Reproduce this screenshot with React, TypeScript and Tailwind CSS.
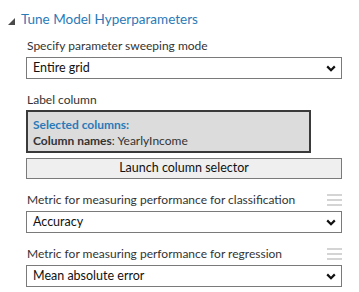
import { ReactNode } from 'react';

const font = { fontFamily: '"Segoe UI", Lato, "Noto Sans", sans-serif' };

function Chevron() {
  return (
    <svg width="10" height="7" viewBox="0 0 10 7" className="shrink-0">
      <path d="M1.2 1.4 L5 5.2 L8.8 1.4" fill="none" stroke="#111" strokeWidth="2.2" />
    </svg>
  );
}

function Grip() {
  return (
    <div className="flex flex-col gap-[3px] w-[15px]">
      <div className="h-[2px] bg-[#d4d4d4]" />
      <div className="h-[2px] bg-[#d4d4d4]" />
      <div className="h-[2px] bg-[#d4d4d4]" />
    </div>
  );
}

function Select({ value }: { value: string }) {
  return (
    <div className="h-[22px] w-[316px] border border-[#7a7a7a] bg-white flex items-center justify-between pl-[6px] pr-[5px] text-[12.5px] text-[#111]">
      <span>{value}</span>
      <Chevron />
    </div>
  );
}

function Label({ children, grip }: { children: ReactNode; grip?: boolean }) {
  return (
    <div className="flex items-center justify-between w-[316px] h-[18px] text-[12px] text-[#333]">
      <span className="pl-px whitespace-nowrap">{children}</span>
      {grip && <Grip />}
    </div>
  );
}

export default function App() {
  return (
    <div className="w-[359px] h-[292px] bg-white relative" style={font}>
      {/* Header */}
      <div className="flex items-center h-[24px] pt-[8px] box-content">
        <svg width="7" height="7" viewBox="0 0 7 7" className="ml-[8px] mt-[2px]">
          <polygon points="7,0 7,7 0,7" fill="#4a4a4a" />
        </svg>
        <span className="ml-[6px] text-[13.5px] text-[#2a7ab8] leading-none whitespace-nowrap">Tune Model Hyperparameters</span>
      </div>

      <div className="pl-[26px] flex flex-col">
        <div className="mt-[5px]"><Label>Specify parameter sweeping mode</Label></div>
        <div className="mt-[2px]"><Select value="Entire grid" /></div>

        <div className="mt-[12px]"><Label>Label column</Label></div>
        <div className="mt-[1px] w-[285px] h-[43px] border-2 border-[#3a3a3a] bg-[#dcdcdc] flex flex-col justify-center pl-[5px] pt-[2px] text-[12px] leading-[16px]">
          <div className="font-bold text-[#2a7ab8]">Selected columns:</div>
          <div className="text-[#333]">
            <span className="font-bold">Column names</span>: YearlyIncome
          </div>
        </div>
        <button className="mt-[5px] w-[316px] h-[21px] border border-[#7a7a7a] bg-[#efefef] text-[12.5px] text-[#111] flex items-center justify-center">
          Launch column selector
        </button>

        <div className="mt-[12px]"><Label grip>Metric for measuring performance for classification</Label></div>
        <div className="mt-[2px]"><Select value="Accuracy" /></div>

        <div className="mt-[12px]"><Label grip>Metric for measuring performance for regression</Label></div>
        <div className="mt-[2px]"><Select value="Mean absolute error" /></div>
      </div>
    </div>
  );
}
